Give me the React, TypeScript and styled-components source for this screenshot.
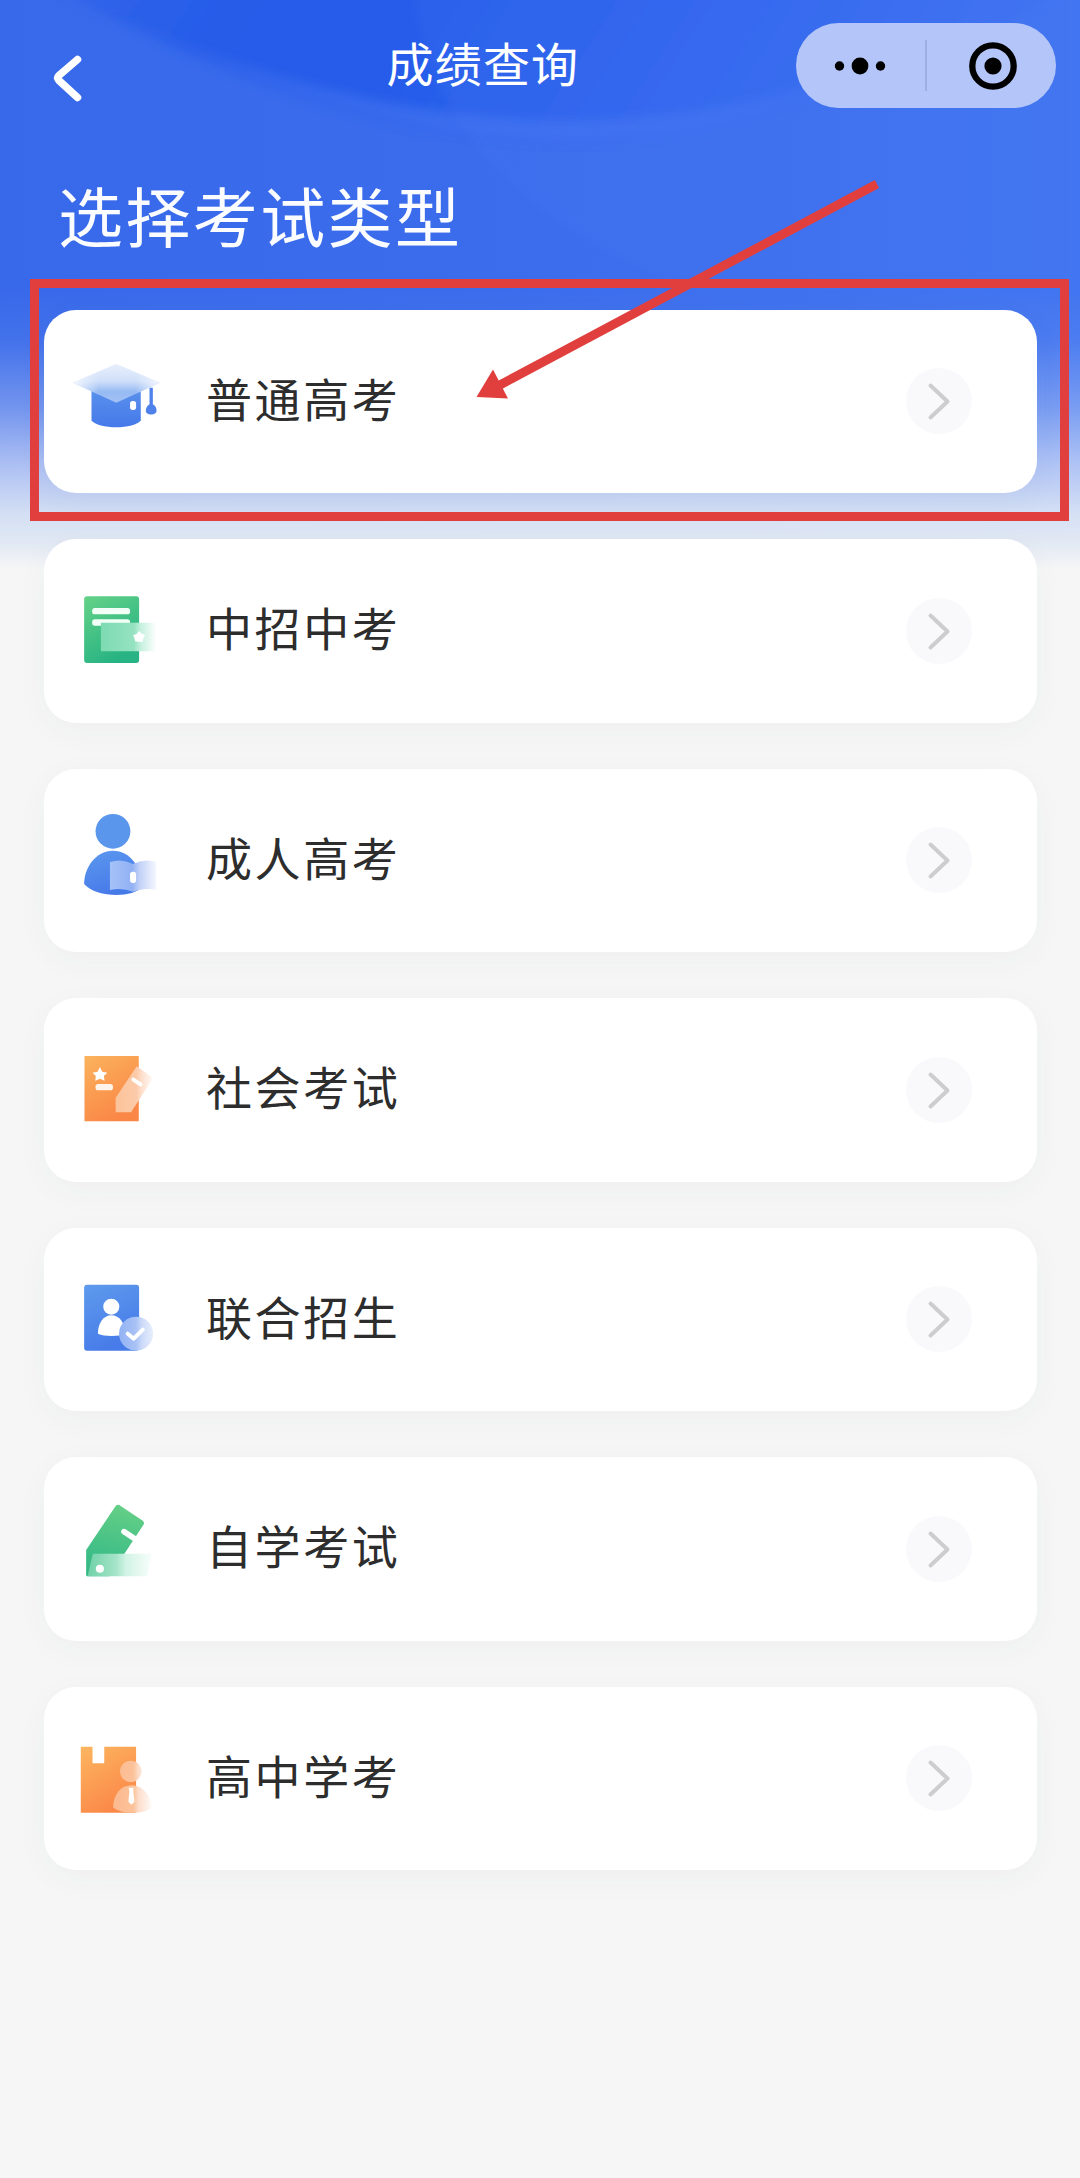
import React from "react";
import styled, { createGlobalStyle } from "styled-components";

const GlobalStyle = createGlobalStyle`
  *, *::before, *::after { box-sizing: border-box; }
  body { margin: 0; background: #f6f6f6; }
`;

const Page = styled.div`
  position: relative;
  width: 1080px;
  height: 2178px;
  overflow: hidden;
  background: #f6f6f6;
  font-family: "Noto Sans CJK SC", "Noto Sans", sans-serif;
`;

const Backdrop = styled.svg`
  position: absolute;
  top: 0;
  left: 0;
`;

const Content = styled.div`
  position: relative;
  display: flex;
  flex-direction: column;
`;

const NavBar = styled.header`
  display: grid;
  grid-template-columns: 285px 1fr 285px;
  height: 132px;
  padding: 0 24.5px 0 0;
`;

const BackButton = styled.button`
  width: 56px;
  height: 64px;
  margin: 46px 0 0 40px;
  padding: 0;
  border: 0;
  background: none;
`;

const NavTitle = styled.h1`
  margin: 0;
  padding: 27px 0 0 101.5px;
  color: #fff;
  font-size: 47px;
  font-weight: 400;
  line-height: 70px;
  letter-spacing: 1.2px;
  white-space: nowrap;
`;

const Capsule = styled.div`
  display: flex;
  align-items: center;
  justify-self: end;
  width: 260px;
  height: 85px;
  margin-top: 23px;
  border-radius: 43px;
  background: #b4c6f9;
`;

const CapsuleHalf = styled.div<{ $width: number }>`
  display: flex;
  flex: none;
  align-items: center;
  justify-content: center;
  width: ${(p) => p.$width}px;
`;

const CapsuleDivider = styled.div`
  flex: none;
  width: 2px;
  height: 51px;
  background: #9db0e4;
`;

const Heading = styled.h2`
  height: 177px;
  margin: 0;
  padding: 36px 0 0 58px;
  color: #fbfcff;
  font-size: 65px;
  font-weight: 400;
  line-height: 92px;
  letter-spacing: 2.4px;
`;

const ExamList = styled.ul`
  display: flex;
  flex-direction: column;
  gap: 46px;
  margin: 0;
  padding: 0.5px 43.5px 0;
  list-style: none;
`;

const ExamCard = styled.li`
  display: flex;
  align-items: center;
  height: 183.5px;
  padding: 0 64.5px 0 16px;
  border-radius: 32px;
  background: #fff;
  box-shadow: 0 8px 32px rgba(60, 70, 90, 0.04);
`;

const ExamName = styled.span`
  flex: 1;
  padding: 0 0 9px 26.5px;
  color: #2d2d2d;
  font-size: 46px;
  line-height: 68px;
  letter-spacing: 2.6px;
`;

const GoButton = styled.span`
  display: grid;
  place-items: center;
  width: 66px;
  height: 66px;
  border-radius: 50%;
  background: #f9f9fc;
`;

const Highlight = styled.div`
  position: absolute;
  top: 279px;
  left: 30px;
  width: 1039px;
  height: 242px;
  border: 9px solid #e13f3e;
`;

const Arrow = styled.svg`
  position: absolute;
  top: 0;
  left: 0;
`;

const CapIcon = () => (
  <>
    <defs>
      <linearGradient id="capBody" x1="0" y1="0" x2="0" y2="1">
        <stop offset="0" stopColor="#5b93ec" />
        <stop offset="1" stopColor="#4579ea" />
      </linearGradient>
      <linearGradient id="capTop" x1="0" y1="0" x2="0" y2="1">
        <stop offset="0" stopColor="#eaf0fc" />
        <stop offset="0.45" stopColor="#cfdff9" />
        <stop offset="0.72" stopColor="#96baf3" />
        <stop offset="1" stopColor="#a3c1f5" />
      </linearGradient>
      <linearGradient id="capFade" x1="0" y1="0" x2="1" y2="0">
        <stop offset="0" stopColor="#f3f7fe" />
        <stop offset="0.3" stopColor="#eef3fd" stopOpacity="0" />
        <stop offset="0.72" stopColor="#eef3fd" stopOpacity="0" />
        <stop offset="1" stopColor="#f3f7fe" />
      </linearGradient>
    </defs>
    <path d="M96 140H243V240C225 268 114 268 96 240Z" fill="url(#capBody)" />
    <path d="M170 70L300 127L170 187L40 127Z" fill="url(#capTop)" />
    <path d="M170 70L300 127L170 187L40 127Z" fill="url(#capFade)" />
    <rect x="211" y="182" width="18" height="27" rx="8" fill="#fff" />
    <path d="M269 142H279V192C287 196 290 204 290 211C290 226 258 226 258 211C258 203 262 196 269 192Z" fill="#4e82ea" />
  </>
);

const WalletIcon = () => (
  <>
    <defs>
      <linearGradient id="bookGreen" x1="0" y1="0" x2="0.5" y2="1">
        <stop offset="0" stopColor="#65d287" />
        <stop offset="1" stopColor="#27b383" />
      </linearGradient>
      <linearGradient id="walletGreen" x1="0" y1="0" x2="1" y2="0">
        <stop offset="0" stopColor="#7ddbb2" />
        <stop offset="0.6" stopColor="#95e2c1" />
        <stop offset="0.72" stopColor="#c3efdd" />
        <stop offset="1" stopColor="#fdfffe" />
      </linearGradient>
    </defs>
    <rect x="74" y="78" width="164" height="200" rx="9" fill="url(#bookGreen)" />
    <rect x="98" y="113" width="113" height="19" rx="8" fill="#f2fff6" />
    <rect x="98" y="147" width="113" height="19" rx="8" fill="#f2fff6" />
    <path d="M124 157H288V243H124Z" fill="url(#walletGreen)" />
    <path d="M238 182L246 190L256 194L251 204L248 215L237 214L226 213L224 203L220 195L231 191Z" fill="#fff" />
  </>
);

const PersonIcon = () => (
  <>
    <defs>
      <linearGradient id="personBlue" x1="0" y1="0" x2="0.4" y2="1">
        <stop offset="0" stopColor="#5c99ef" />
        <stop offset="1" stopColor="#477ae9" />
      </linearGradient>
      <linearGradient id="openBook" x1="0" y1="0" x2="1" y2="0">
        <stop offset="0" stopColor="#a5c2f8" />
        <stop offset="0.48" stopColor="#91b1f4" />
        <stop offset="0.64" stopColor="#c1d1f7" />
        <stop offset="1" stopColor="#f5f7fe" />
      </linearGradient>
    </defs>
    <circle cx="160" cy="94" r="52" fill="#5b96ed" />
    <path d="M74 252C73 205 108 152 160 152C213 152 246 204 246 262C220 294 108 294 74 252Z" fill="url(#personBlue)" />
    <path d="M151 186Q186 174 220 192Q254 174 289 186V270Q252 262 220 275Q187 262 151 270Z" fill="url(#openBook)" />
    <rect x="211" y="215" width="18" height="34" rx="8" fill="#fff" />
  </>
);

const PencilIcon = () => (
  <>
    <defs>
      <linearGradient id="noteOrange" x1="0" y1="0" x2="0.5" y2="1">
        <stop offset="0" stopColor="#fbb35d" />
        <stop offset="1" stopColor="#fa8746" />
      </linearGradient>
      <linearGradient id="pencilFade" x1="0" y1="0" x2="1" y2="0">
        <stop offset="0" stopColor="#fcc39a" />
        <stop offset="0.55" stopColor="#fccaa8" />
        <stop offset="0.7" stopColor="#fde0cd" />
        <stop offset="1" stopColor="#fffcfa" />
      </linearGradient>
    </defs>
    <path d="M75 77H237V273H75Z" fill="url(#noteOrange)" />
    <path d="M121 110L128 124L143 127L133 137L135 151L121 145L107 151L109 137L99 127L114 124Z" fill="#fff" />
    <rect x="108" y="161" width="52" height="19" rx="8" fill="#fff4e9" />
    <path d="M231 108L280 143L214 246H168V202Z" fill="url(#pencilFade)" />
    <path d="M221 148L242 162" stroke="#fff" strokeWidth="12" strokeLinecap="round" />
  </>
);

const VerifiedIcon = () => (
  <>
    <defs>
      <linearGradient id="cardBlue" x1="0" y1="0" x2="0.4" y2="1">
        <stop offset="0" stopColor="#5e9bec" />
        <stop offset="1" stopColor="#477be9" />
      </linearGradient>
      <linearGradient id="badgeFade" x1="0" y1="0" x2="1" y2="0">
        <stop offset="0" stopColor="#92b2f4" />
        <stop offset="0.5" stopColor="#a9c2f6" />
        <stop offset="0.68" stopColor="#cddbf9" />
        <stop offset="1" stopColor="#e8effd" />
      </linearGradient>
    </defs>
    <rect x="74" y="74" width="164" height="198" rx="9" fill="url(#cardBlue)" />
    <circle cx="155" cy="140" r="24" fill="#fff" />
    <path d="M115 221C115 190 132 166 155 166C180 166 196 190 196 221C178 230 134 230 115 221Z" fill="#fff" />
    <circle cx="229" cy="221" r="51" fill="url(#badgeFade)" />
    <path d="M204 221L222 236L249 209" fill="none" stroke="#fff" strokeWidth="12" strokeLinecap="round" strokeLinejoin="round" />
  </>
);

const RulerIcon = () => (
  <>
    <defs>
      <linearGradient id="rulerGreen" x1="0.4" y1="0" x2="0.2" y2="1">
        <stop offset="0" stopColor="#63ce86" />
        <stop offset="0.7" stopColor="#3fbe87" />
        <stop offset="1" stopColor="#32b882" />
      </linearGradient>
      <linearGradient id="rulerBase" x1="0" y1="0" x2="1" y2="0">
        <stop offset="0" stopColor="#6ed1a5" />
        <stop offset="0.45" stopColor="#a6e4ca" />
        <stop offset="0.6" stopColor="#d2f3e6" />
        <stop offset="1" stopColor="#f8fefb" />
      </linearGradient>
    </defs>
    <path d="M168 61Q175 54 183 61L249 105Q256 111 250 119L150 272H84Q80 272 80 268V193Z" fill="url(#rulerGreen)" />
    <path d="M193 138L228 161" stroke="#fff" strokeWidth="17" strokeLinecap="round" />
    <path d="M100 204H276L262 272H84Z" fill="url(#rulerBase)" />
    <circle cx="121" cy="249" r="12" fill="#fff" />
  </>
);

const StudyIcon = () => (
  <>
    <defs>
      <linearGradient id="studyOrange" x1="0" y1="0" x2="0.5" y2="1">
        <stop offset="0" stopColor="#fcb660" />
        <stop offset="1" stopColor="#fb8848" />
      </linearGradient>
      <linearGradient id="studyHead" gradientUnits="userSpaceOnUse" x1="160" y1="0" x2="278" y2="0">
        <stop offset="0" stopColor="#fcb98e" />
        <stop offset="0.52" stopColor="#fcc29a" />
        <stop offset="0.64" stopColor="#fcdcc8" />
        <stop offset="1" stopColor="#fffcfb" />
      </linearGradient>
    </defs>
    <path d="M64 65H99V115H134V65H229V263H64Z" fill="url(#studyOrange)" />
    <circle cx="213" cy="139" r="32" fill="url(#studyHead)" />
    <path d="M160 247C162 207 184 181 214 181C248 181 273 210 276 247C255 269 184 269 160 247Z" fill="url(#studyHead)" />
    <path d="M207 188H221V200L224 230L215 239L206 230L209 200Z" fill="#fff" />
  </>
);

const exams = [
  { name: "普通高考", Icon: CapIcon, top: 17 },
  { name: "中招中考", Icon: WalletIcon, top: 17 },
  { name: "成人高考", Icon: PersonIcon, top: 15 },
  { name: "社会考试", Icon: PencilIcon, top: 14 },
  { name: "联合招生", Icon: VerifiedIcon, top: 12 },
  { name: "自学考试", Icon: RulerIcon, top: 25 },
  { name: "高中学考", Icon: StudyIcon, top: -6 },
];

export default function App() {
  return (
    <Page>
      <GlobalStyle />
      <Backdrop width="1080" height="570" viewBox="0 0 1080 570" aria-hidden="true">
        <defs>
          <linearGradient id="sky" x1="0" y1="0" x2="1" y2="0">
            <stop offset="0" stopColor="#3869ea" />
            <stop offset="0.45" stopColor="#3b6cec" />
            <stop offset="1" stopColor="#4275f0" />
          </linearGradient>
          <linearGradient id="deep" x1="0" y1="0" x2="1" y2="0.1">
            <stop offset="0" stopColor="#3567ea" />
            <stop offset="0.2" stopColor="#255be8" />
            <stop offset="0.4" stopColor="#265ce9" />
            <stop offset="0.7" stopColor="#3266ee" />
            <stop offset="1" stopColor="#4073f0" />
          </linearGradient>
          <linearGradient id="rim" x1="0" y1="0" x2="0" y2="1">
            <stop offset="0.2" stopColor="#4474f0" stopOpacity="0" />
            <stop offset="1" stopColor="#4474f0" stopOpacity="0.75" />
          </linearGradient>
          <linearGradient id="fade" x1="0" y1="0" x2="0" y2="1">
            <stop offset="0" stopColor="#f6f6f6" stopOpacity="0" />
            <stop offset="0.18" stopColor="#f0f2f8" stopOpacity="0.06" />
            <stop offset="0.42" stopColor="#eff1f8" stopOpacity="0.32" />
            <stop offset="0.62" stopColor="#eceff8" stopOpacity="0.64" />
            <stop offset="0.8" stopColor="#e9eff5" stopOpacity="0.88" />
            <stop offset="0.9" stopColor="#eaeff4" stopOpacity="0.95" />
            <stop offset="1" stopColor="#f6f6f6" />
          </linearGradient>
          <filter id="soft" x="-10%" y="-20%" width="120%" height="140%">
            <feGaussianBlur stdDeviation="5" />
          </filter>
        </defs>
        <rect width="1080" height="570" fill="url(#sky)" />
        <path d="M40 -20C210 75 370 138 560 142C750 142 920 80 1080 -20Z" fill="url(#deep)" filter="url(#soft)" />
        <path d="M40 -20C210 75 370 138 560 142C750 142 920 80 1080 -20C920 60 750 120 560 120C370 116 210 60 40 -20Z" fill="url(#rim)" filter="url(#soft)" />
        <path d="M415 -10C425 120 520 230 700 290L1080 290V-10Z" fill="#4779f4" opacity="0.2" filter="url(#soft)" />
        <rect y="290" width="1080" height="280" fill="url(#fade)" />
      </Backdrop>

      <Content>
        <NavBar>
          <BackButton aria-label="返回">
            <svg width="56" height="64" viewBox="0 0 56 64" fill="none">
              <path d="M37.500 13.500L19 29.500Q16.500 32 19 34.500L37.500 51.500" stroke="#fff" strokeWidth="7.500" strokeLinecap="round" />
            </svg>
          </BackButton>
          <NavTitle>成绩查询</NavTitle>
          <Capsule>
            <CapsuleHalf $width={129}>
              <svg width="52" height="18" viewBox="0 0 52 18">
                <circle cx="5.500" cy="9" r="4.700" />
                <circle cx="26" cy="9" r="8.400" />
                <circle cx="46.500" cy="9" r="4.700" />
              </svg>
            </CapsuleHalf>
            <CapsuleDivider />
            <CapsuleHalf $width={129}>
              <svg width="56" height="50" viewBox="-6 0 56 50">
                <circle cx="24" cy="25" r="20.700" fill="none" stroke="#000" strokeWidth="6.300" />
                <circle cx="24" cy="25" r="8.600" />
              </svg>
            </CapsuleHalf>
          </Capsule>
        </NavBar>

        <Heading>选择考试类型</Heading>

        <ExamList>
          {exams.map(({ name, Icon, top }) => (
            <ExamCard key={name}>
              <svg width="120" height="110" viewBox={`2 ${top} 358 330`} preserveAspectRatio="none" aria-hidden="true">
                <Icon />
              </svg>
              <ExamName>{name}</ExamName>
              <GoButton>
                <svg width="30" height="44" viewBox="0 0 30 44" fill="none">
                  <path d="M6.500 6.500L23.500 22.500L6.500 38.500" stroke="#cdcdd0" strokeWidth="4" strokeLinecap="round" strokeLinejoin="round" />
                </svg>
              </GoButton>
            </ExamCard>
          ))}
        </ExamList>
      </Content>

      <Highlight />
      <Arrow width="1080" height="560" viewBox="0 0 1080 560" aria-hidden="true">
        <path d="M877 184L498 386" stroke="#e13f3e" strokeWidth="9" />
        <path d="M476.500 397L493 369.500L508 398.500Z" fill="#e13f3e" />
      </Arrow>
    </Page>
  );
}
